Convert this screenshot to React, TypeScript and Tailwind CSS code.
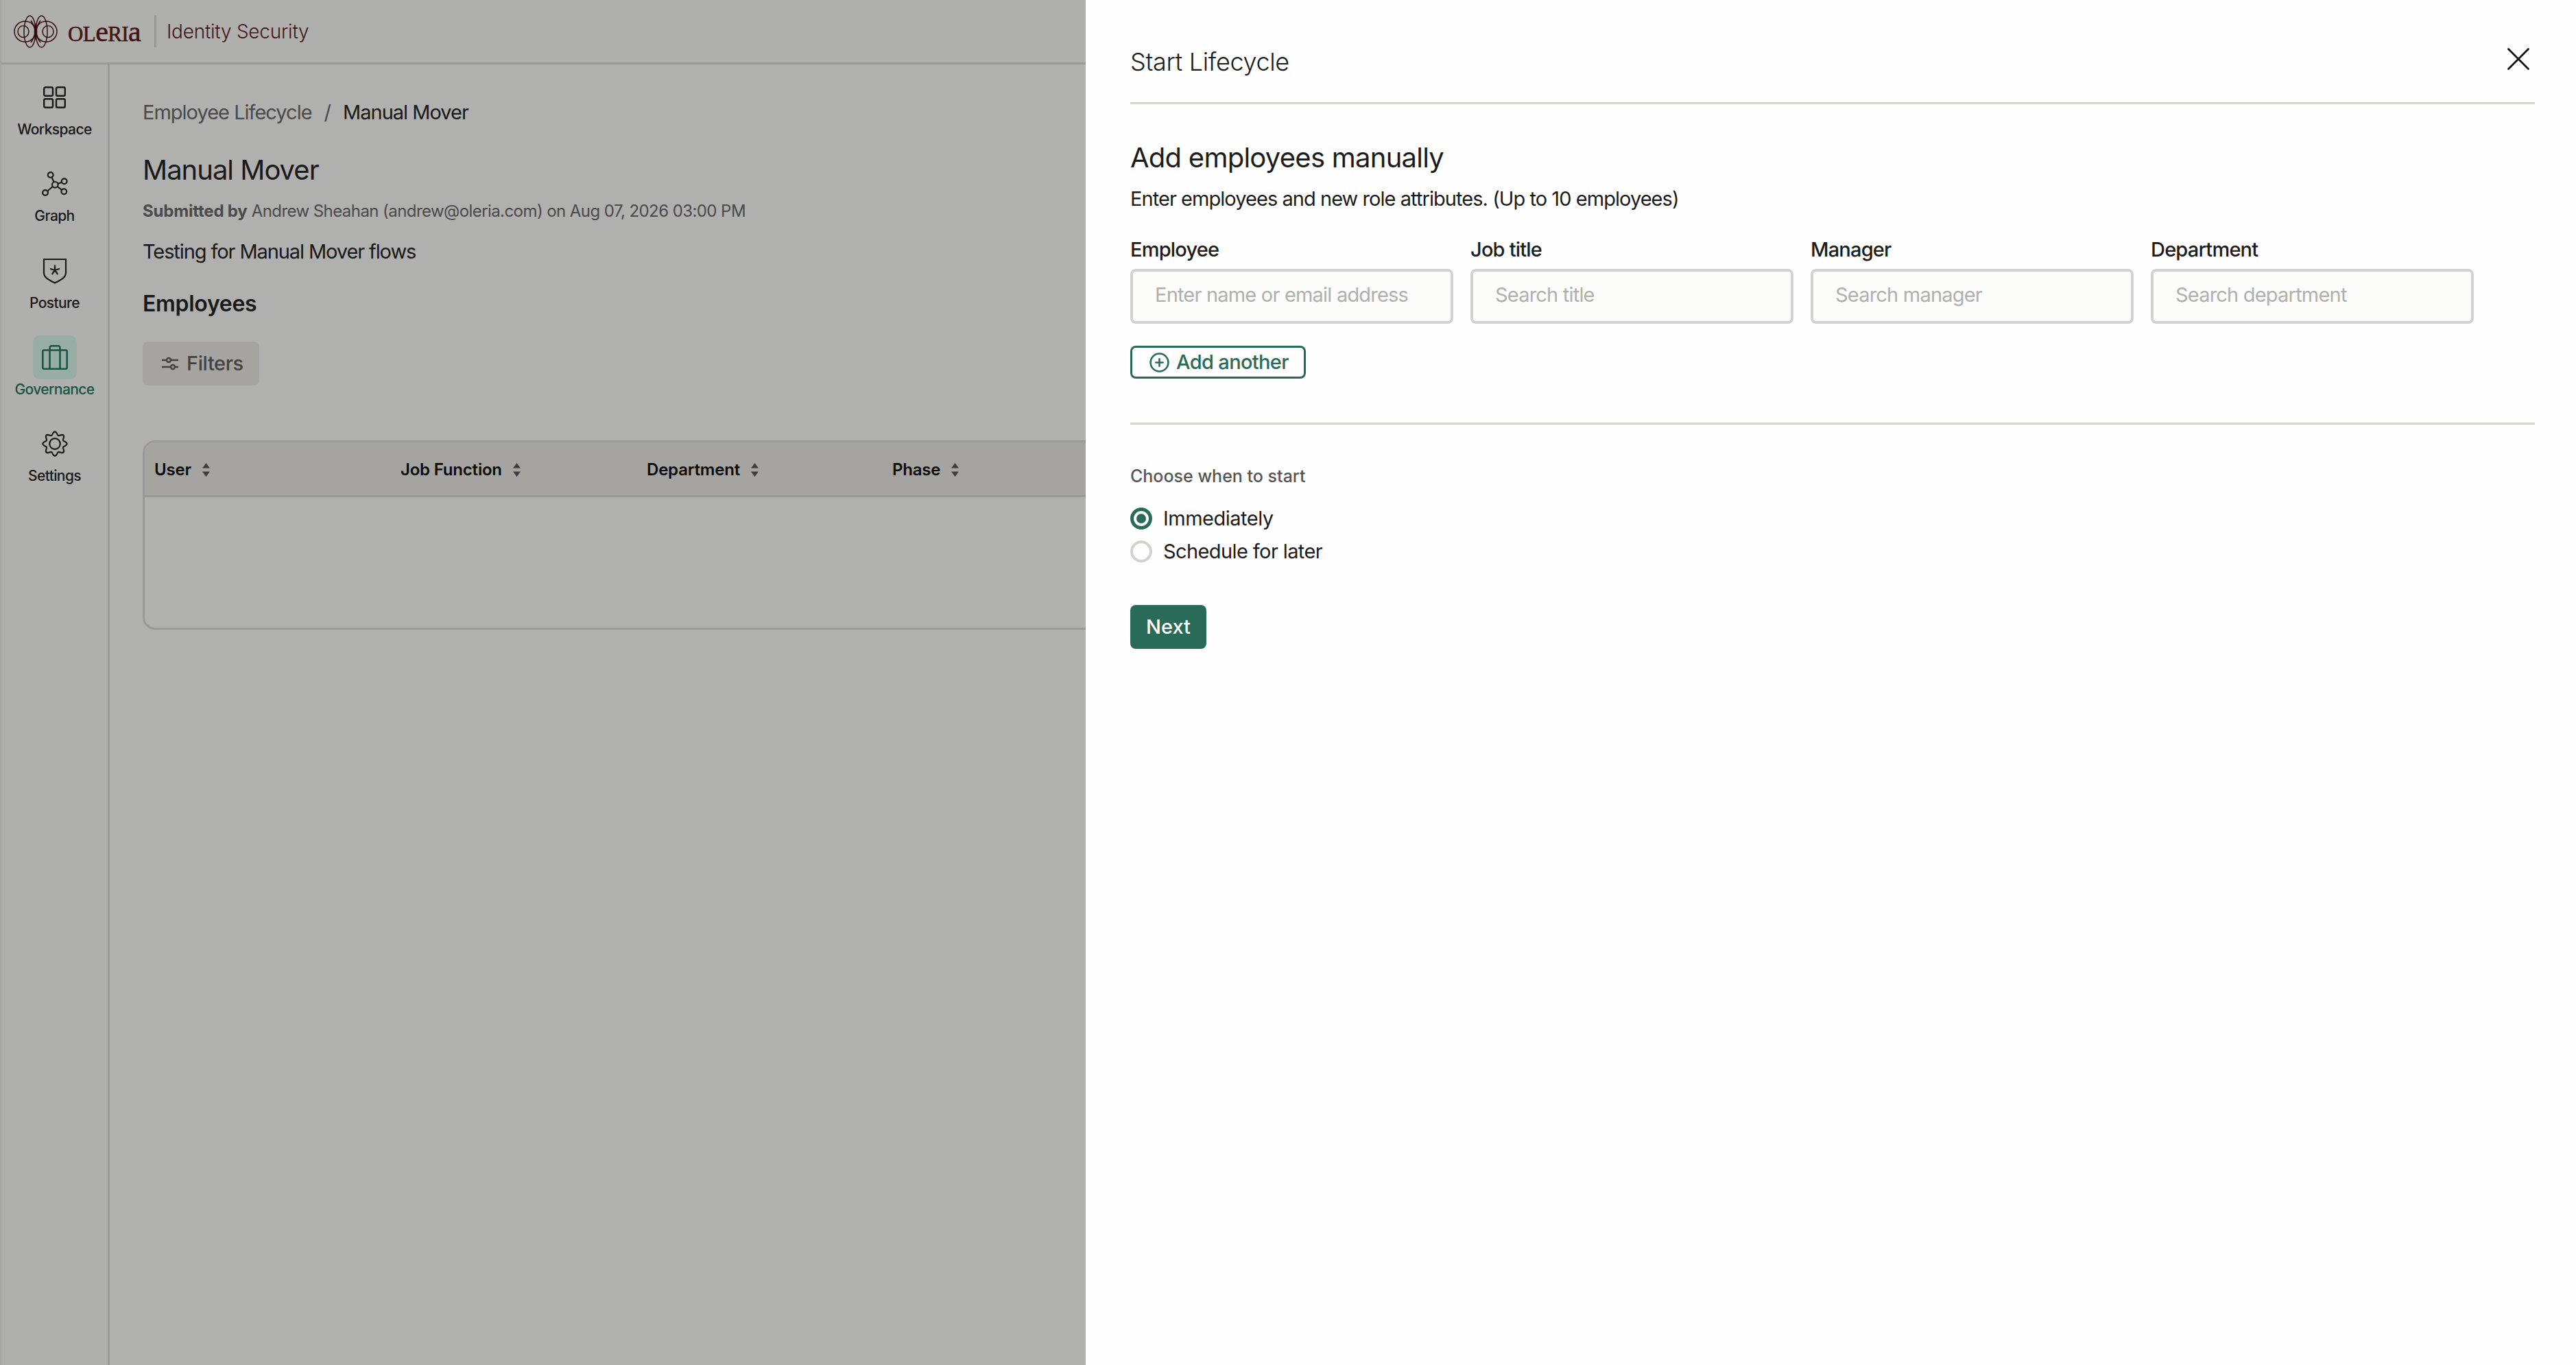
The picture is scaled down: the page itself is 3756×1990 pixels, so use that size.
import { CirclePlus } from 'lucide-react'

const font = "font-['Inter','Liberation_Sans',sans-serif]"

const columns = ['User', 'Job Function', 'Department', 'Phase']

const fields = [
  { label: 'Employee', placeholder: 'Enter name or email address' },
  { label: 'Job title', placeholder: 'Search title' },
  { label: 'Manager', placeholder: 'Search manager' },
  { label: 'Department', placeholder: 'Search department' },
]

function OleriaMark() {
  return (
    <svg width="64" height="48" viewBox="0 0 64 48" fill="none" stroke="#4a1414" strokeWidth="1.500">
      <ellipse cx="16.500" cy="24" rx="15.500" ry="15" />
      <ellipse cx="47.500" cy="24" rx="15.500" ry="15" />
      <ellipse cx="23.500" cy="24" rx="8.500" ry="23" />
      <ellipse cx="40.500" cy="24" rx="8.500" ry="23" />
      <ellipse cx="14" cy="24" rx="8" ry="8.500" />
      <ellipse cx="50" cy="24" rx="8" ry="8.500" />
      <ellipse cx="32" cy="24" rx="2.300" ry="12" fill="#4a1414" stroke="none" />
      <path d="M32 24C30 17 28 12 25 8M32 24C34 17 36 12 39 8M32 24C30 31 28 36 25 40M32 24C34 31 36 36 39 40" strokeWidth="1.800" />
    </svg>
  )
}

function WorkspaceIcon() {
  return (
    <svg width="33" height="32" viewBox="0 0 33 32" fill="none" stroke="currentColor" strokeWidth="2.400">
      <rect x="1.200" y="1.200" width="12.800" height="12.600" rx="2" />
      <rect x="19" y="1.200" width="12.800" height="12.600" rx="2" />
      <rect x="1.200" y="18.200" width="12.800" height="12.600" rx="2" />
      <rect x="19" y="18.200" width="12.800" height="12.600" rx="2" />
    </svg>
  )
}

function GraphIcon() {
  return (
    <svg width="38" height="36" viewBox="0 0 38 36" fill="none" stroke="currentColor" strokeWidth="2.200">
      <circle cx="12.700" cy="5" r="3.900" />
      <circle cx="32.700" cy="14.300" r="3.900" />
      <circle cx="19.300" cy="19.300" r="4.300" />
      <circle cx="32.300" cy="29.300" r="3.900" />
      <circle cx="5" cy="31" r="3.900" />
      <path d="M14.500 8.500l3 6.500M23.400 17.800l5.700-2.100M22.800 22l6.200 4.800M15.800 22l-7.500 6.500" />
    </svg>
  )
}

function PostureIcon() {
  return (
    <svg width="36" height="38" viewBox="0 0 36 38" fill="none" stroke="currentColor" strokeWidth="2.200">
      <path d="M2 2h32v20c0 7-9 11-16 14.500C11 33 2 29 2 22z" strokeLinejoin="round" />
      <path d="M18 18v-7.500M18 18l7-2.300M18 18l4.300 6M18 18l-4.300 6M18 18l-7-2.300" />
    </svg>
  )
}

function GovernanceIcon() {
  return (
    <svg width="38" height="36" viewBox="0 0 38 36" fill="none" stroke="currentColor" strokeWidth="2.600">
      <rect x="1.300" y="7.500" width="35.400" height="27.200" rx="2" />
      <path d="M11.500 34.700V4a2.700 2.700 0 0 1 2.700-2.700h9.600A2.700 2.700 0 0 1 26.500 4v30.700" />
    </svg>
  )
}

// wavy outline with 8 rounded lobes
const gearPath =
  Array.from({ length: 120 }, (_, i) => {
    const a = (i / 120) * Math.PI * 2
    const r = 15.3 + 2.300 * Math.cos(8 * a)
    return `${i === 0 ? 'M' : 'L'}${(19 + r * Math.sin(a)).toFixed(2)} ${(19 - r * Math.cos(a)).toFixed(2)}`
  }).join('') + 'Z'

function SettingsIcon() {
  return (
    <svg width="38" height="38" viewBox="0 0 38 38" fill="none" stroke="currentColor" strokeWidth="2.200" strokeLinejoin="round">
      <path d={gearPath} />
      <circle cx="19" cy="19" r="7.800" />
    </svg>
  )
}

function FiltersIcon() {
  return (
    <svg width="26" height="22" viewBox="0 0 26 22" fill="none" stroke="currentColor" strokeWidth="2.400">
      <path d="M1 6h7M14 6h11M1 16h13M20 16h5" />
      <circle cx="11" cy="6" r="3" />
      <circle cx="17" cy="16" r="3" />
    </svg>
  )
}

function SortIcon() {
  return (
    <svg width="11" height="20" viewBox="0 0 11 20" className="shrink-0 text-[#5a5a5a]" fill="currentColor">
      <path d="M5.500 0l5.500 7.500H0zM5.500 20l5.500-7.500H0z" />
    </svg>
  )
}

const navItems = [
  { label: 'Workspace', icon: <WorkspaceIcon />, active: false },
  { label: 'Graph', icon: <GraphIcon />, active: false },
  { label: 'Posture', icon: <PostureIcon />, active: false },
  { label: 'Governance', icon: <GovernanceIcon />, active: true },
  { label: 'Settings', icon: <SettingsIcon />, active: false },
]

export default function App() {
  return (
    <div className={`relative h-screen w-full overflow-hidden bg-[#fcfcfa] ${font}`}>
      <div className="flex h-full flex-col border-l-2 border-l-[#ececec]">
        <header className="flex h-[94px] shrink-0 items-center border-b-[3px] border-[#dcdcd8] bg-[#fbfbf8] pl-[18px]">
          <OleriaMark />
          <span className="ml-[15px] flex w-[105px] items-baseline font-['Liberation_Serif',serif] text-[31px] leading-none tracking-[-0.6px] text-[#601e1e] [-webkit-text-stroke:0.6px_#601e1e]">
            OL<span className="text-[42px]">e</span>RI<span className="text-[42px]">a</span>
          </span>
          <div className="ml-[21px] h-[47px] w-[3px] bg-[#d8d8d4]" />
          <span className="ml-[15px] text-[28px] font-light tracking-[-0.25px] text-[#601e1e]">Identity Security</span>
        </header>

        <div className="flex min-h-0 flex-1">
          <nav className="flex w-[158px] shrink-0 flex-col items-center border-r-[3px] border-[#dcdcd8] bg-[#fbfbf8] pt-[16px]">
            {navItems.map((item) => (
              <div key={item.label} className={`flex h-[126.3px] w-full flex-col items-center ${item.active ? 'text-[#26795f]' : 'text-[#262626]'}`}>
                <div className={`flex h-[64px] w-[64px] items-center justify-center rounded-[10px] ${item.active ? 'bg-[#dcf8ef]' : ''}`}>{item.icon}</div>
                <span className="mt-[2px] text-[21px] leading-[26px] font-medium tracking-[-0.6px]">{item.label}</span>
              </div>
            ))}
          </nav>

          <main className="min-w-0 flex-1 pt-[52px] pl-[48px]">
            <div className="flex h-[36px] items-center text-[29px] tracking-[-1px] text-[#6a6a6a]">
              <span>Employee Lifecycle</span>
              <span className="mx-[18px]">/</span>
              <span className="text-[#262626]">Manual Mover</span>
            </div>
            <h1 className="mt-[40px] text-[40px] leading-[52px] font-normal tracking-[-1px] text-[#262626]">Manual Mover</h1>
            <p className="mt-[18px] text-[24px] leading-[32px] tracking-[-0.57px] text-[#6a6a6a]"><span className="font-bold tracking-[-0.2px]">Submitted by</span> Andrew Sheahan (andrew@oleria.com) on Aug 07, 2026 03:00 PM</p>
            <p className="mt-[25px] text-[29px] leading-[36px] tracking-[-1.1px] text-[#262626]">Testing for Manual Mover flows</p>
            <h2 className="mt-[38px] text-[32px] leading-[40px] font-semibold tracking-[-0.3px] text-[#262626]">Employees</h2>
            <button className="mt-[35px] flex h-[64px] w-[170px] items-center gap-[11px] rounded-[8px] bg-[#ecebe7] pl-[27px] text-[29px] font-medium tracking-[-0.4px] text-[#5f5f5f]">
              <FiltersIcon />
              Filters
            </button>
            <div className="mt-[80px] h-[276px] w-[1800px] overflow-hidden rounded-[18px] border-[3px] border-[#dcdcd8]">
              <div className="grid h-[80px] grid-cols-[359px_359px_358px_359px] items-center border-b-[3px] border-[#dcdcd8] bg-[#ecebe7] pt-[2px] pl-[14px] text-[24px] font-semibold tracking-[-0.2px] text-[#111111]">
                {columns.map((col) => (
                  <div key={col} className="flex items-center gap-[16px]">
                    {col}
                    <SortIcon />
                  </div>
                ))}
              </div>
            </div>
          </main>
        </div>
      </div>

      <div className="absolute inset-0 bg-black/30" />

      <aside className="absolute top-0 right-0 bottom-0 w-[2173px] bg-[#fefefe] pr-[60px] pl-[65px]">
        <div className="flex h-[152px] items-start justify-between border-b-[3px] border-[#d4d4cf] pt-[68px]">
          <h2 className="text-[36px] leading-[44px] font-light tracking-[-0.35px] text-[#1c1c1c]">Start Lifecycle</h2>
          <svg width="32" height="32" viewBox="0 0 32 32" fill="none" stroke="#111111" strokeWidth="2.800" strokeLinecap="round" className="mt-[2px] mr-[8px]">
            <path d="M1.500 1.500l29 29M30.500 1.500l-29 29" />
          </svg>
        </div>

        <h3 className="mt-[53px] text-[40px] leading-[50px] font-normal tracking-[-0.75px] text-[#1c1c1c]">Add employees manually</h3>
        <p className="mt-[17px] text-[29px] leading-[36px] tracking-[-0.95px] text-[#1c1c1c]">Enter employees and new role attributes. (Up to 10 employees)</p>

        <div className="mt-[38px] flex gap-[25px]">
          {fields.map((field) => (
            <label key={field.label} className="flex w-[471px] flex-col">
              <span className="text-[29px] leading-[36px] font-medium tracking-[-0.8px] text-[#1c1c1c]">{field.label}</span>
              <input
                placeholder={field.placeholder}
                className="mt-[10px] h-[80px] rounded-[8px] border-[4px] border-[#d2d2ce] bg-[#fcfcfa] pb-[5px] pl-[32px] text-[29px] tracking-[-0.8px] outline-none placeholder:text-[#b0b0ac]"
              />
            </label>
          ))}
        </div>

        <button className="mt-[32px] flex h-[48px] w-[256px] items-center gap-[9px] rounded-[8px] border-[3px] border-[#2a6a58] pl-[24px] text-[29px] font-medium tracking-[-0.65px] text-[#2a6a58]">
          <CirclePlus size={31} strokeWidth={2} />
          Add another
        </button>

        <div className="mt-[64px] h-[3px] w-full bg-[#d4d4cf]" />

        <p className="mt-[59px] text-[25px] leading-[32px] font-medium text-[#555555]">Choose when to start</p>
        <div className="mt-[30px] flex flex-col gap-[16px]">
          <label className="flex h-[32px] items-center gap-[16px] text-[29px] tracking-[-0.5px] text-[#1c1c1c]">
            <span className="flex h-[32px] w-[32px] items-center justify-center rounded-full border-[5px] border-[#2a6a58]">
              <span className="h-[14px] w-[14px] rounded-full bg-[#2a6a58]" />
            </span>
            Immediately
          </label>
          <label className="flex h-[32px] items-center gap-[16px] text-[29px] tracking-[-0.6px] text-[#1c1c1c]">
            <span className="h-[32px] w-[32px] rounded-full border-[4px] border-[#d2d2ce]" />
            Schedule for later
          </label>
        </div>

        <button className="mt-[62px] h-[64px] w-[111px] rounded-[8px] bg-[#2a6a58] text-[29px] font-medium text-white">Next</button>
      </aside>
    </div>
  )
}
